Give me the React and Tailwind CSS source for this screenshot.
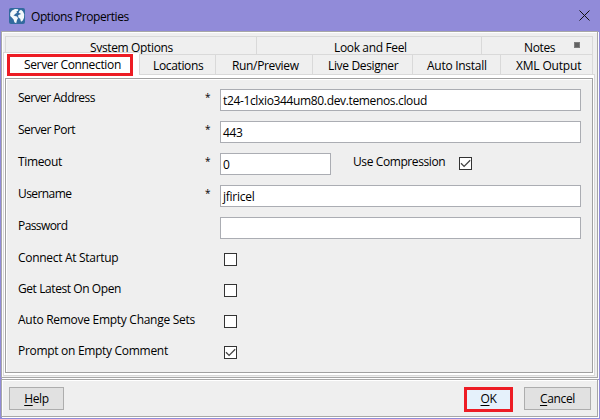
import React from 'react';

const FONT = 'font-["Open_Sans","Noto_Sans",sans-serif]';

function Check({ on, className = '' }) {
  return (
    <span className={`block h-[13px] w-[13px] shrink-0 border border-[#333] bg-white ${className}`}>
      {on && (
        <svg viewBox="0 0 11 11" className="block h-[11px] w-[11px]" fill="none" stroke="#444" strokeWidth="1.3">
          <path d="M1 5.3 L4.1 8.4 L10.2 2.3" />
        </svg>
      )}
    </span>
  );
}

function Tab({ width, tracking = '', className = '', children }) {
  return (
    <div className={`flex h-full shrink-0 items-start overflow-hidden border-t border-l border-[#d9d9d9] pt-[3px] ${width} ${className}`}>
      <span className={tracking}>{children}</span>
    </div>
  );
}

function Field({ label, tracking = '', required, value, valueTracking = '', input = 'w-[361px]', children }) {
  return (
    <div className="flex h-[32px] shrink-0 items-start">
      <span className="w-[187px] shrink-0 pt-px"><span className={tracking}>{label}</span></span>
      <span className="w-[15px] shrink-0 text-[10px]">{required ? '*' : ''}</span>
      <span className={`block h-[22px] shrink-0 border border-[#abadb3] bg-white pt-[3px] pl-[2px] ${input}`}>
        <span className={valueTracking}>{value}</span>
      </span>
      {children}
    </div>
  );
}

function Option({ label, tracking = '', on }) {
  return (
    <div className="flex h-[31px] shrink-0 items-start">
      <span className="w-[206px] shrink-0 pt-px"><span className={tracking}>{label}</span></span>
      <Check on={on} className="mt-[4px]" />
    </div>
  );
}

function Button({ mnemonic, rest, className }) {
  return (
    <button type="button" className={`flex items-start justify-center ${className}`}>
      <span><span className="underline underline-offset-2">{mnemonic}</span>{rest}</span>
    </button>
  );
}

export default function App() {
  return (
    <div className={`flex h-[419px] w-[600px] flex-col overflow-hidden bg-[#918bd9] text-[12px] leading-[16px] tracking-[-0.35px] whitespace-nowrap text-black ${FONT}`}>
      <header className="flex h-[31px] shrink-0 items-center pr-[10px] pl-[9px]">
        <svg viewBox="0 0 16 16" className="h-4 w-4">
          <rect width="16" height="16" rx="2" fill="#326a9f" />
          <path d="M1.2 5 3 2.4 6 .9 9.2 1.2 9 2.8 7.4 3.4 8 4.8 6.4 5.8 5.4 6.8 4.4 7.2 6 8 8 8.6 9 10.2 8 12 7.2 15.2 5.4 14.2 4.6 11.4 2.8 9.6 1.2 8Z" fill="#f4f8fb" />
          <path d="M9.6 4.8 10.4 2.8 12 1.8 14 3.6 15.2 6.2 15 9.8 13.8 12.4 12 13.8 11.2 10.8 9.6 9.8 9 7.6 10.6 6.4 12.2 6Z" fill="#f4f8fb" />
        </svg>
        <span className="relative top-px ml-[5px] pl-px tracking-[-0.43px]">Options Properties</span>
        <svg viewBox="0 0 11 11" className="ml-auto h-[11px] w-[11px]" stroke="#111" strokeWidth="1">
          <path d="M.5 .5 10.5 10.5M10.5 .5 .5 10.5" />
        </svg>
      </header>

      <main className="mr-[2px] ml-px flex h-[347px] shrink-0 flex-col border border-[#a7a7a7] bg-[#efefef] pt-[4px] pl-px shadow-[1px_1px_white,inset_1px_1px_white]">
        <div className="ml-[2px] flex h-[18px] w-[588px] shrink-0 border-r border-[#d9d9d9]">
          <Tab width="w-[251px]" className="pl-[84px]">System Options</Tab>
          <Tab width="w-[225px]" className="pl-[77px]">Look and Feel</Tab>
          <Tab width="w-[111px]" className="pl-[42px]">
            Notes
            <span className="mt-[2px] ml-[19px] inline-block h-[6px] w-[6px] border border-[#7d7d7d] bg-[#626262] align-top" />
          </Tab>
        </div>
        <div className="flex h-[20px] w-[590px] shrink-0 items-start border-r border-[#d9d9d9]">
          <div className="relative z-10 -mt-[2px] h-[24px] w-[136px] shrink-0 border-t border-l border-[#d9d9d9] bg-white pt-px pl-[3px]">
            <div className="h-[22px] w-[126px] border-[3px] border-[#ed1c24] pl-[14px]">
              <span className="block">Server Connection</span>
            </div>
          </div>
          <Tab width="w-[76px]" className="pl-[13px]">Locations</Tab>
          <Tab width="w-[97px]" className="pl-[16px]">Run/Preview</Tab>
          <Tab width="w-[100px]" className="pl-[15px]">Live Designer</Tab>
          <Tab width="w-[88px]" className="pl-[14px]" tracking="tracking-[-0.28px]">Auto Install</Tab>
          <Tab width="w-[92px]" className="pl-[15px]" tracking="tracking-[-0.18px]">XML Output</Tab>
        </div>

        <section className="h-[302px] w-[592px] shrink-0 border border-[#d9d9d9] bg-white pt-[3px] pr-px pb-[2px] pl-px">
          <div className="flex h-[295px] w-[588px] flex-col border border-[#a0a0a0] bg-[#efefef] pt-[10px] pl-[12px] shadow-[inset_1px_1px_white]">
            <Field label="Server Address" tracking="tracking-[-0.53px]" required value="t24-1clxio344um80.dev.temenos.cloud" />
            <Field label="Server Port" tracking="tracking-[-0.5px]" required value="443" />
            <Field label="Timeout" required value="0" input="w-[111px]">
              <span className="ml-[22px] w-[106px] shrink-0 pt-px tracking-[-0.4px]">Use Compression</span>
              <Check on className="mt-[4px]" />
            </Field>
            <Field label="Username" tracking="tracking-[-0.58px]" required value="jfiricel" valueTracking="tracking-[-0.25px]" />
            <Field label="Password" tracking="tracking-[-0.58px]" value="" />
            <Option label="Connect At Startup" tracking="tracking-[-0.3px]" />
            <Option label="Get Latest On Open" tracking="tracking-[-0.42px]" />
            <Option label="Auto Remove Empty Change Sets" tracking="tracking-[-0.28px]" />
            <Option label="Prompt on Empty Comment" tracking="tracking-[-0.3px]" on />
          </div>
        </section>
      </main>

      <footer className="mt-px mr-[2px] ml-px flex h-[38px] shrink-0 items-start border border-[#a7a7a7] bg-[#efefef] pt-[7px] pl-[7px] shadow-[1px_1px_white,inset_1px_1px_white]">
        <Button mnemonic="H" rest="elp" className="h-[23px] w-[55px] border border-[#adadad] bg-[#e1e1e1] pt-[3px]" />
        <Button mnemonic="O" rest="K" className="ml-auto h-[25px] w-[49px] border-[3px] border-[#ed1c24] bg-[#e5f1fb] pt-px" />
        <Button mnemonic="C" rest="ancel" className="mr-[6px] ml-[11px] h-[23px] w-[67px] border border-[#adadad] bg-[#e1e1e1] pt-[3px]" />
      </footer>
    </div>
  );
}
